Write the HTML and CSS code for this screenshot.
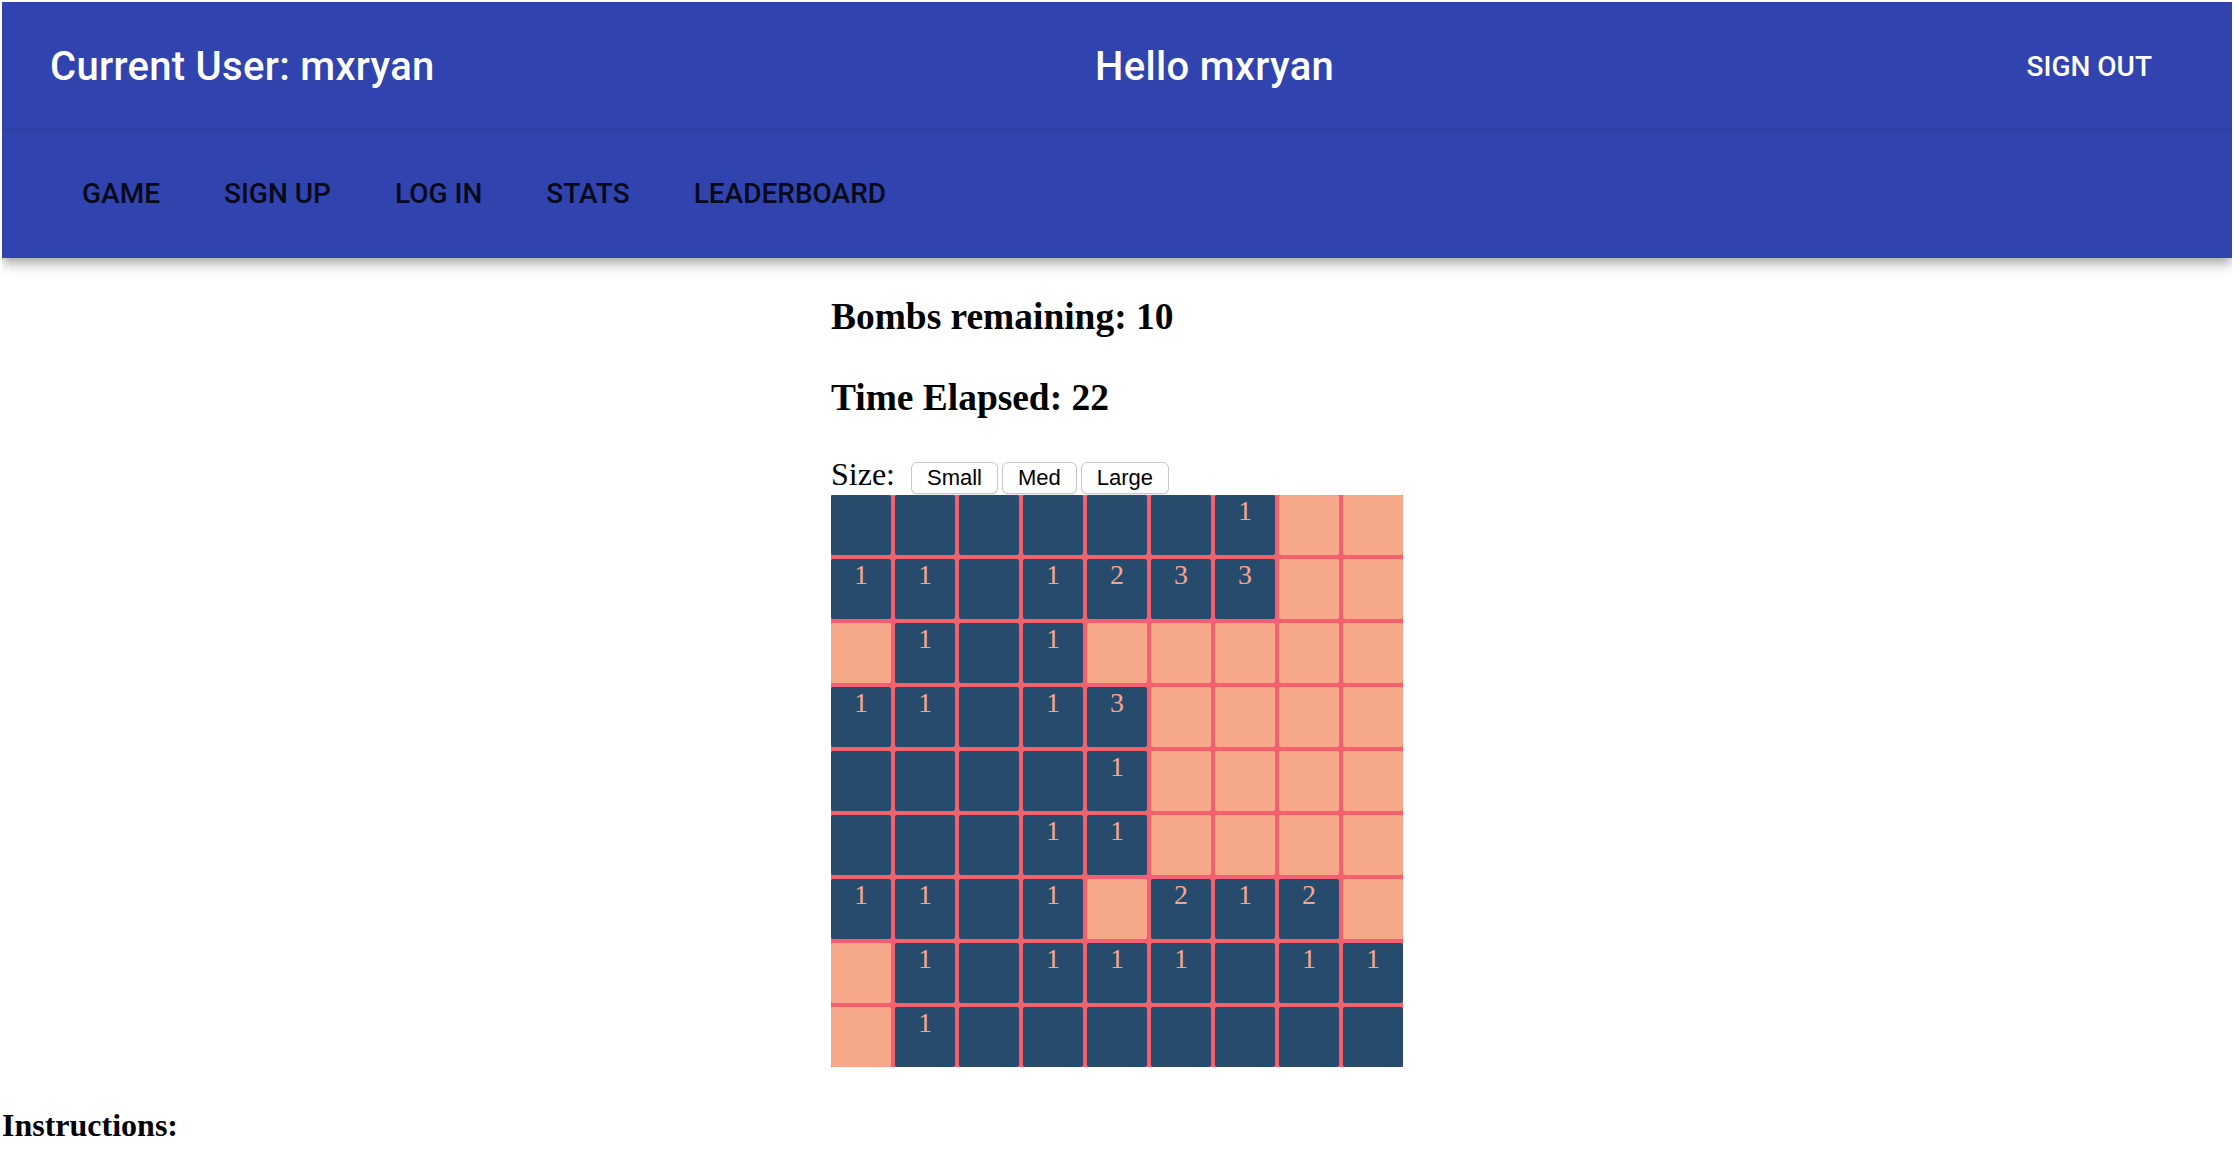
FILE: index.html
```html
<!DOCTYPE html>
<html lang="en">
<head>
<meta charset="utf-8">
<title>Minesweeper</title>
<link rel="stylesheet" href="styles.css">
</head>
<body>
<header class="appbar">
  <div class="topbar">
    <div class="title">Current User: mxryan</div>
    <div class="title">Hello mxryan</div>
    <button class="signout">Sign Out</button>
  </div>
  <nav class="navbar">
    <a class="navlink">Game</a>
    <a class="navlink">Sign Up</a>
    <a class="navlink">Log In</a>
    <a class="navlink">Stats</a>
    <a class="navlink">Leaderboard</a>
  </nav>
</header>
<main class="game-wrap">
  <div class="game">
    <h3 class="stat">Bombs remaining: 10</h3>
    <h3 class="stat">Time Elapsed: 22</h3>
    <div class="size-row">
      <span class="size-label">Size:</span>
      <button class="size-btn first">Small</button>
      <button class="size-btn">Med</button>
      <button class="size-btn">Large</button>
    </div>
    <div class="board">
      <div class="cell d"></div><div class="cell d"></div><div class="cell d"></div><div class="cell d"></div><div class="cell d"></div><div class="cell d"></div><div class="cell d">1</div><div class="cell l"></div><div class="cell l"></div>
      <div class="cell d">1</div><div class="cell d">1</div><div class="cell d"></div><div class="cell d">1</div><div class="cell d">2</div><div class="cell d">3</div><div class="cell d">3</div><div class="cell l"></div><div class="cell l"></div>
      <div class="cell l"></div><div class="cell d">1</div><div class="cell d"></div><div class="cell d">1</div><div class="cell l"></div><div class="cell l"></div><div class="cell l"></div><div class="cell l"></div><div class="cell l"></div>
      <div class="cell d">1</div><div class="cell d">1</div><div class="cell d"></div><div class="cell d">1</div><div class="cell d">3</div><div class="cell l"></div><div class="cell l"></div><div class="cell l"></div><div class="cell l"></div>
      <div class="cell d"></div><div class="cell d"></div><div class="cell d"></div><div class="cell d"></div><div class="cell d">1</div><div class="cell l"></div><div class="cell l"></div><div class="cell l"></div><div class="cell l"></div>
      <div class="cell d"></div><div class="cell d"></div><div class="cell d"></div><div class="cell d">1</div><div class="cell d">1</div><div class="cell l"></div><div class="cell l"></div><div class="cell l"></div><div class="cell l"></div>
      <div class="cell d">1</div><div class="cell d">1</div><div class="cell d"></div><div class="cell d">1</div><div class="cell l"></div><div class="cell d">2</div><div class="cell d">1</div><div class="cell d">2</div><div class="cell l"></div>
      <div class="cell l"></div><div class="cell d">1</div><div class="cell d"></div><div class="cell d">1</div><div class="cell d">1</div><div class="cell d">1</div><div class="cell d"></div><div class="cell d">1</div><div class="cell d">1</div>
      <div class="cell l"></div><div class="cell d">1</div><div class="cell d"></div><div class="cell d"></div><div class="cell d"></div><div class="cell d"></div><div class="cell d"></div><div class="cell d"></div><div class="cell d"></div>
    </div>
  </div>
</main>
<h4 class="instructions">Instructions:</h4>
</body>
</html>
```

FILE: styles.css
```css
html, body {
  background: #ffffff;
}

body {
  margin: 2px 8px 0 2px;
  font-family: "Liberation Serif", "Times New Roman", serif;
  color: #000;
}

.appbar {
  background: #3043ae;
  box-shadow: 0 4px 8px -2px rgba(0,0,0,0.2), 0 8px 10px 0 rgba(0,0,0,0.14), 0 2px 20px 0 rgba(0,0,0,0.12);
  position: relative;
  z-index: 2;
}

.topbar {
  height: 127px;
  padding: 3px 48px 0;
  box-sizing: border-box;
  display: flex;
  align-items: center;
  justify-content: space-between;
  border-bottom: 1px solid #2f41a8;
  box-shadow: 0 1px 3px rgba(0,0,0,0.06);
}

.title {
  font-family: Roboto, "Liberation Sans", sans-serif;
  font-weight: 500;
  font-size: 40px;
  letter-spacing: 0.3px;
  color: #ffffff;
  line-height: 1.6;
}

.signout {
  font-family: Roboto, "Liberation Sans", sans-serif;
  font-weight: 500;
  font-size: 28px;
  letter-spacing: 0;
  text-transform: uppercase;
  color: #ffffff;
  background: transparent;
  border: 0;
  padding: 12px 32px;
  line-height: 1.75;
  cursor: pointer;
}

.navbar {
  height: 129px;
  padding: 0 48px;
  display: flex;
  align-items: center;
}

.navlink {
  font-family: Roboto, "Liberation Sans", sans-serif;
  font-weight: 500;
  font-size: 28px;
  letter-spacing: 0;
  text-transform: uppercase;
  color: rgba(0,0,0,0.87);
  padding: 12px 32px;
  line-height: 1.75;
  cursor: pointer;
}

.game-wrap {
  display: flex;
  justify-content: center;
}

.game {
  width: 572px;
}

.stat {
  font-size: 37.44px;
  font-weight: bold;
  margin: 37.44px 0;
}

.size-row {
  display: flex;
  align-items: baseline;
}

.size-label {
  font-size: 32px;
  margin-right: 16px;
}

.size-btn {
  font-family: "Liberation Sans", Arial, sans-serif;
  font-size: 22px;
  height: 32px;
  padding: 0 15px;
  margin-left: 4px;
  background: #ffffff;
  color: #000;
  border: 1px solid #c6c6c6;
  border-radius: 6px;
  box-shadow: 0 1px 1px rgba(0,0,0,0.08);
}

.size-btn.first {
  margin-left: 0;
}

.board {
  display: grid;
  grid-template-columns: repeat(9, 60px);
  grid-auto-rows: 60px;
  gap: 4px;
  background: #f3616f;
  width: 572px;
  margin-top: 1px;
}

.cell {
  border-radius: 2px;
  text-align: center;
  font-size: 28px;
  line-height: normal;
  color: #f6a88a;
}

.cell.d {
  background: #274b6d;
}

.cell.l {
  background: #f6a88a;
}

.instructions {
  font-size: 32px;
  font-weight: bold;
  margin: 40px 0;
}
```
